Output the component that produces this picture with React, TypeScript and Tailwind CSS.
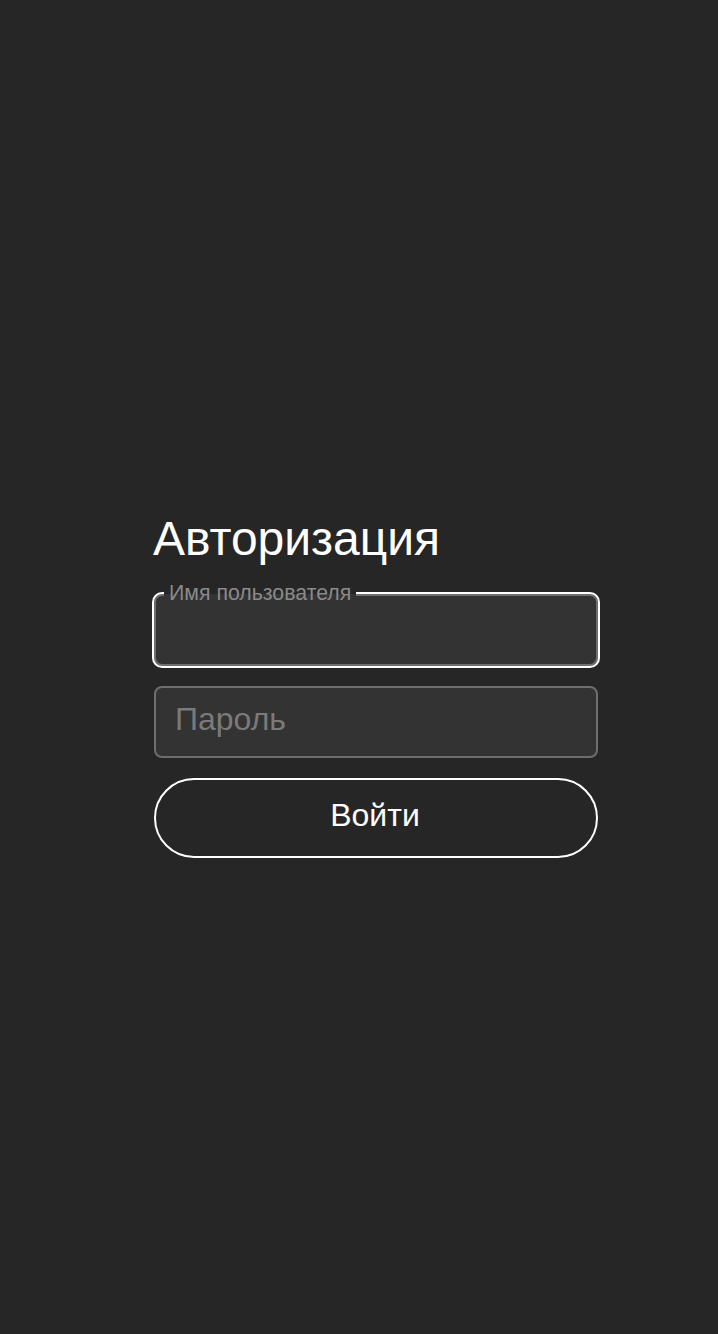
export default function App() {
  return (
    <div
      className="min-h-screen bg-[#262626] pt-[511px] pl-[154px]"
      style={{ fontFamily: '"Liberation Sans", Arial, sans-serif' }}
    >
      <div className="w-[444px] flex flex-col">
        <h1 className="text-[48px] leading-[56px] text-white -ml-[1px]">Авторизация</h1>

        {/* username, focused */}
        <div className="relative mt-[27px]">
          <input
            type="text"
            className="w-full h-[72px] rounded-lg border-2 border-[#6e6e6e] bg-[#333333] ring-2 ring-white px-5 pb-[6px] text-[32px] text-white outline-none"
          />
          <span className="absolute left-[10px] -top-[12px] px-[5px] text-[21.3px] leading-[22px] text-[#8a8a8a] bg-[linear-gradient(to_bottom,#262626_55%,#333333_55%)]">
            Имя пользователя
          </span>
        </div>

        <input
          type="password"
          placeholder="Пароль"
          className="mt-5 w-full h-[72px] rounded-lg border-2 border-[#6e6e6e] bg-[#333333] pl-[19px] pr-5 pb-[6px] text-[32px] text-white placeholder:text-[#7a7a7a] outline-none"
        />

        <button className="mt-5 h-[80px] w-full rounded-full border-2 border-white pb-[6px] pr-[2px] text-[32px] text-white">
          Войти
        </button>
      </div>
    </div>
  );
}
